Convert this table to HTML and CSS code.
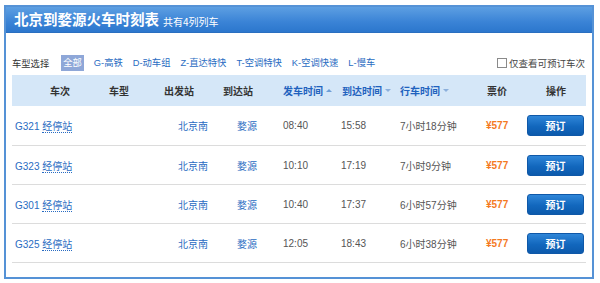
FILE: index.html
```html
<!DOCTYPE html>
<html lang="zh">
<head>
<meta charset="utf-8">
<title>北京到婺源火车时刻表</title>
<link rel="stylesheet" href="styles.css">
</head>
<body>
<div class="box">
  <div class="bar">
    <h1 class="title">北京到婺源火车时刻表</h1>
    <span class="count">共有4列列车</span>
  </div>
  <div class="filters">
    <span class="flabel">车型选择</span>
    <span class="fitem active">全部</span>
    <a class="fitem">G-高铁</a>
    <a class="fitem">D-动车组</a>
    <a class="fitem">Z-直达特快</a>
    <a class="fitem">T-空调特快</a>
    <a class="fitem">K-空调快速</a>
    <a class="fitem">L-慢车</a>
    <label class="only"><span class="cb"></span>仅查看可预订车次</label>
  </div>
  <div class="table">
    <div class="thead">
      <div class="c1">车次</div>
      <div class="c2">车型</div>
      <div class="c3">出发站</div>
      <div class="c4">到达站</div>
      <div class="c5 sort">发车时间<i class="up"></i></div>
      <div class="c6 sort">到达时间<i class="down"></i></div>
      <div class="c7 sort">行车时间<i class="down"></i></div>
      <div class="c8">票价</div>
      <div class="c9">操作</div>
    </div>
    <div class="row first">
      <div class="c1"><a class="tno">G321</a> <a class="stops">经停站</a></div>
      <div class="c2"></div>
      <div class="c3"><a class="st">北京南</a></div>
      <div class="c4"><a class="st">婺源</a></div>
      <div class="c5">08:40</div>
      <div class="c6">15:58</div>
      <div class="c7">7小时18分钟</div>
      <div class="c8 price">¥577</div>
      <div class="c9"><button class="btn">预订</button></div>
    </div>
    <div class="row">
      <div class="c1"><a class="tno">G323</a> <a class="stops">经停站</a></div>
      <div class="c2"></div>
      <div class="c3"><a class="st">北京南</a></div>
      <div class="c4"><a class="st">婺源</a></div>
      <div class="c5">10:10</div>
      <div class="c6">17:19</div>
      <div class="c7">7小时9分钟</div>
      <div class="c8 price">¥577</div>
      <div class="c9"><button class="btn">预订</button></div>
    </div>
    <div class="row">
      <div class="c1"><a class="tno">G301</a> <a class="stops">经停站</a></div>
      <div class="c2"></div>
      <div class="c3"><a class="st">北京南</a></div>
      <div class="c4"><a class="st">婺源</a></div>
      <div class="c5">10:40</div>
      <div class="c6">17:37</div>
      <div class="c7">6小时57分钟</div>
      <div class="c8 price">¥577</div>
      <div class="c9"><button class="btn">预订</button></div>
    </div>
    <div class="row">
      <div class="c1"><a class="tno">G325</a> <a class="stops">经停站</a></div>
      <div class="c2"></div>
      <div class="c3"><a class="st">北京南</a></div>
      <div class="c4"><a class="st">婺源</a></div>
      <div class="c5">12:05</div>
      <div class="c6">18:43</div>
      <div class="c7">6小时38分钟</div>
      <div class="c8 price">¥577</div>
      <div class="c9"><button class="btn">预订</button></div>
    </div>
  </div>
</div>
</body>
</html>
```

FILE: styles.css
```css
* { box-sizing: border-box; }
html, body { margin: 0; padding: 0; background: #fff; }
body {
  font-family: "Liberation Sans", "Noto Sans CJK SC", sans-serif;
  font-size: 10px;
  color: #555;
}
a { color: #2a6cc2; text-decoration: none; }

.box {
  margin: 5px 0 0 4px;
  width: 590px;
  height: 274px;
  border: 2px solid #5592d6;
  padding: 0 6px 0 0;
}
.bar {
  margin-right: -6px;
  height: 26px;
  background: linear-gradient(#5d9fe2, #3a83d6 60%, #2c77cd);
  border-bottom: 1px solid #2a6fc0;
  display: flex;
  align-items: center;
  padding-left: 8px;
  color: #fff;
}
.title {
  margin: 0;
  font-family: "Noto Sans CJK SC", sans-serif;
  font-size: 14.5px;
  font-weight: bold;
  line-height: 1;
}
.count {
  margin-left: 4px;
  margin-top: 3px;
  font-size: 10px;
  font-family: "Noto Sans CJK SC", sans-serif;
}

.filters {
  display: flex;
  align-items: center;
  padding: 18px 0 0 6px;
  height: 42px;
  font-size: 9.3px;
}
.flabel { color: #333; margin-right: 12px; }
.fitem { margin-right: 10px; color: #2a6cc2; line-height: 16px; }
.fitem.active {
  background: #8ea7d8;
  color: #fff;
  padding: 0 2px;
  height: 16px;
}
.only {
  margin-left: auto;
  margin-right: 1px;
  display: flex;
  align-items: center;
  color: #444;
  font-size: 9.5px;
}
.cb {
  width: 10px;
  height: 10px;
  border: 1px solid #8a8a8a;
  background: #fff;
  margin-right: 2px;
}

.table { margin-left: 6px; width: 574px; }
.thead, .row {
  display: grid;
  grid-template-columns: 88px 60px 60px 60px 58px 58px 84px 40px 66px;
  align-items: center;
}
.thead {
  height: 31px;
  background: #d5e7f8;
  font-weight: bold;
  color: #333;
  font-family: "Noto Sans CJK SC", sans-serif;
}
.thead .c1 { padding-left: 38px; }
.thead .c2 { padding-left: 9px; }
.thead .c3 { padding-left: 4px; }
.thead .c4 { padding-left: 3px; }
.thead .c5 { padding-left: 3px; }
.thead .c6 { padding-left: 4px; }
.thead .c7 { padding-left: 4px; }
.thead .c8 { padding-left: 7px; }
.thead .c9 { padding-left: 26px; }
.thead .sort { color: #1f62be; display: flex; align-items: center; }
.up, .down {
  display: inline-block;
  width: 0; height: 0;
  margin-left: 3px;
  border-left: 3px solid transparent;
  border-right: 3px solid transparent;
}
.up { border-bottom: 3px solid #6f9fd8; }
.down { border-top: 3px solid #8cb0dc; }

.row {
  height: 39px;
  border-bottom: 1px solid #dcdcdc;
}
.row.first { height: 40px; }
.row .c1 { padding-left: 3px; }
.row .c3 { padding-left: 18px; }
.row .c4 { padding-left: 17px; }
.row .c5 { padding-left: 3px; }
.row .c6 { padding-left: 3px; }
.row .c7 { padding-left: 4px; }
.row .c8 { padding-left: 6px; }
.row .c9 { padding-left: 7px; }
.tno { color: #2a6cc2; }
.stops { color: #2a6cc2; border-bottom: 1px dotted #2a6cc2; }
.st { color: #2a6cc2; }
.price { color: #f47a1f; font-weight: bold; }
.btn {
  width: 57px;
  height: 21px;
  border: 1px solid #0f58a8;
  border-radius: 3px;
  background: linear-gradient(#2f86d8, #1267bd 55%, #0c5aac);
  color: #fff;
  font-family: "Noto Sans CJK SC", sans-serif;
  font-weight: bold;
  font-size: 10px;
  padding: 0;
  display: block;
}
```
